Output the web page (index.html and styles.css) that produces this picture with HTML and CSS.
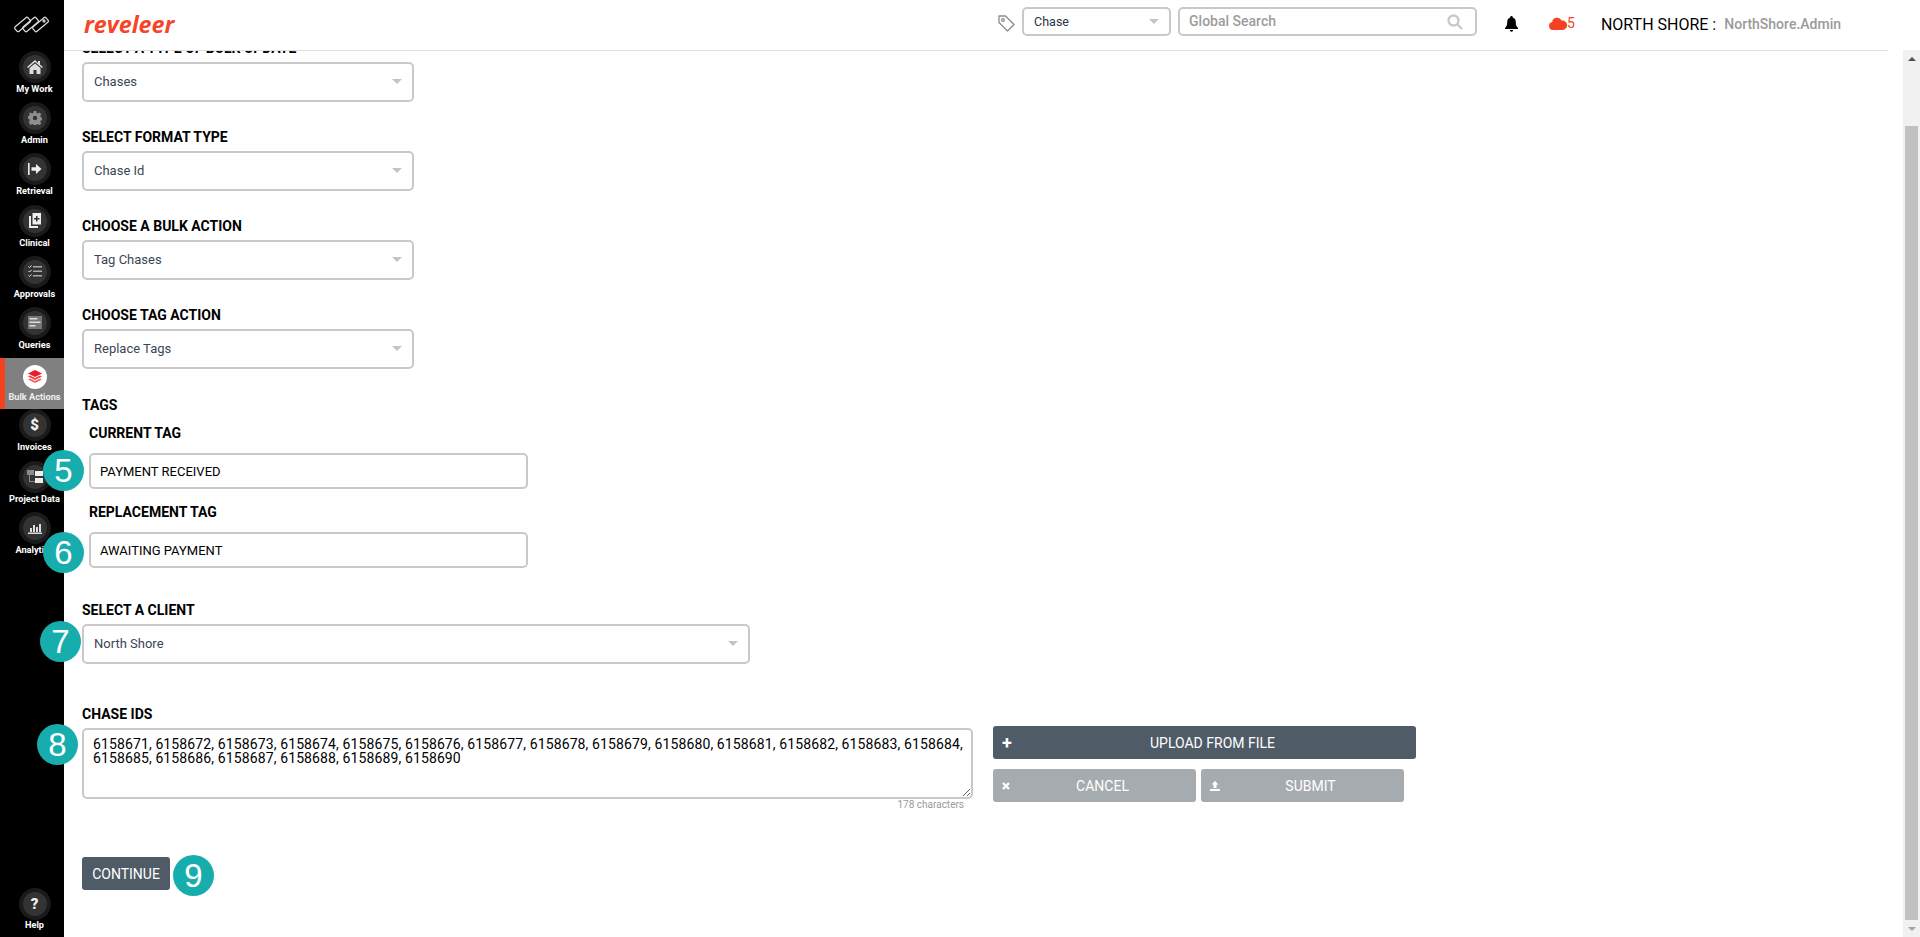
FILE: index.html
```html
<!DOCTYPE html>
<html lang="en">
<head>
    <meta charset="UTF-8">
    <title>Reveleer - Bulk Actions</title>
    <link rel="stylesheet" href="styles.css">
</head>
<body>
<div class="app">
    <nav class="sidebar">
        <div class="brand-mark">
            <svg width="37" height="18" viewBox="0 0 37 18" fill="none" stroke="#d8d8d8" stroke-width="1.3">
                <rect x="1" y="5.500" width="17" height="6" rx="1.500" transform="rotate(-40 9.500 8.500)"/>
                <rect x="9" y="5.500" width="17" height="6" rx="1.500" transform="rotate(-40 17.500 8.500)"/>
                <rect x="19" y="5.500" width="17" height="6" rx="1.500" transform="rotate(-40 27.500 8.500)"/>
                <circle cx="31" cy="5" r="1"/>
            </svg>
        </div>
        <a class="nav-item">
            <span class="nav-icon"><svg width="16" height="14" viewBox="0 0 16 14" fill="#ddd"><path d="M8 0 0 7l1 1 7-6 7 6 1-1-3-2.600V1h-2v2Z"/><path d="M8 3.400 2.500 8v6h4V10h3v4h4V8Z"/></svg></span>
            <span class="nav-label">My Work</span>
        </a>
        <a class="nav-item">
            <span class="nav-icon"><svg width="14" height="14" viewBox="0 0 14 14" fill="#8f8f8f"><path d="M5.800 0h2.400l.4 2 1.300.6L11.600 1.500l1.700 1.700-1.100 1.700.6 1.300 2 .4v2.400l-2 .4-.6 1.300 1.100 1.700-1.700 1.700-1.700-1.100-1.300.6-.4 2H5.800l-.4-2-1.300-.6-1.700 1.100L.7 11.100l1.100-1.700-.6-1.300-2-.4V5.300l2-.4.6-1.300L.7 3.200 2.400 1.500l1.700 1.100 1.300-.6ZM7 4.800a2.200 2.200 0 1 0 0 4.400 2.200 2.200 0 0 0 0-4.400Z"/></svg></span>
            <span class="nav-label">Admin</span>
        </a>
        <a class="nav-item">
            <span class="nav-icon"><svg width="14" height="12" viewBox="0 0 14 12" fill="#eee"><rect x="0" y="0" width="1.600" height="12"/><path d="M8 1 13.500 6 8 11V7.800H3.500V4.200H8Z"/></svg></span>
            <span class="nav-label">Retrieval</span>
        </a>
        <a class="nav-item">
            <span class="nav-icon"><svg width="14" height="16" viewBox="0 0 14 16" fill="#eee"><path d="M1 3h2v10h7v2H1Z"/><path d="M4.500 0H13v11.500H4.500ZM8 3v2H6v1.500h2v2h1.500v-2h2V5h-2V3Z"/></svg></span>
            <span class="nav-label">Clinical</span>
        </a>
        <a class="nav-item">
            <span class="nav-icon"><svg width="14" height="13" viewBox="0 0 14 13" fill="#ddd"><path d="m.5 1.500 1 1 2-2" fill="none" stroke="#eee" stroke-width="1"/><rect x="5" y="1" width="9" height="1.500" fill="#aaa"/><path d="m.5 6 1 1 2-2" fill="none" stroke="#eee" stroke-width="1"/><rect x="5" y="5.500" width="9" height="1.500" fill="#aaa"/><path d="m.5 10.500 1 1 2-2" fill="none" stroke="#eee" stroke-width="1"/><rect x="5" y="10" width="9" height="1.500" fill="#aaa"/></svg></span>
            <span class="nav-label">Approvals</span>
        </a>
        <a class="nav-item">
            <span class="nav-icon"><svg width="14" height="13" viewBox="0 0 14 13"><rect width="14" height="13" fill="#777"/><rect x="1.500" y="2" width="8" height="1.500" fill="#ddd"/><rect x="1.500" y="5.500" width="11" height="1.500" fill="#ddd"/><rect x="1.500" y="9" width="6" height="1.500" fill="#ddd"/></svg></span>
            <span class="nav-label">Queries</span>
        </a>
        <a class="nav-item active">
            <span class="nav-icon"><svg width="14" height="14" viewBox="0 0 14 14" fill="#ee1c25"><path d="M7 0 14 3.500 7 7 0 3.500Z"/><path d="m0 6.500 2-1 5 2.500 5-2.500 2 1L7 10Z" opacity=".85"/><path d="m0 9.500 2-1 5 2.500 5-2.500 2 1L7 13Z" opacity=".7"/></svg></span>
            <span class="nav-label">Bulk Actions</span>
        </a>
        <a class="nav-item">
            <span class="nav-icon dollar">$</span>
            <span class="nav-label">Invoices</span>
        </a>
        <a class="nav-item">
            <span class="nav-icon"><svg width="16" height="14" viewBox="0 0 16 14" fill="#8a8a8a"><rect x="0" y="0" width="7" height="5"/><rect x="8" y="1" width="8" height="5" fill="#eee"/><rect x="8" y="8" width="8" height="5" fill="#eee"/><path d="M2 5h1v6h5v1H2Z"/></svg></span>
            <span class="nav-label">Project Data</span>
        </a>
        <a class="nav-item">
            <span class="nav-icon"><svg width="14" height="12" viewBox="0 0 14 12" fill="#ddd"><rect x="2" y="6" width="2" height="4"/><rect x="5" y="3" width="2" height="7"/><rect x="8" y="5" width="2" height="5"/><rect x="11" y="2" width="2" height="8"/><rect x="0" y="10.500" width="14" height="1.500"/></svg></span>
            <span class="nav-label">Analytics</span>
        </a>
        <a class="nav-item help">
            <span class="nav-icon question">?</span>
            <span class="nav-label">Help</span>
        </a>
    </nav>

    <div class="main">
        <header class="topbar">
            <div class="logo">reveleer</div>
            <div class="topbar-right">
                <svg class="tag-icon" width="17" height="17" viewBox="0 0 17 17" fill="none" stroke="#8c8c8c" stroke-width="1.300"><path d="M1 1h6.500l8.500 8.500-6.500 6.500L1 7.500Z" stroke-linejoin="round"/><circle cx="5" cy="5" r="1.300"/></svg>
                <div class="select select-small"><span>Chase</span><i class="caret"></i></div>
                <input class="search" type="text" placeholder="Global Search">
                <svg class="search-icon" width="16" height="16" viewBox="0 0 16 16" fill="none" stroke="#c9c9c9" stroke-width="2.400"><circle cx="6.500" cy="6.500" r="5"/><path d="m10.500 10.500 4.500 4.500"/></svg>
                <svg class="bell" width="13" height="16" viewBox="0 0 13 16"><path d="M6.500 0a1.200 1.200 0 0 1 1.200 1.400C10 2 10.800 4 10.800 6.500c0 3 .8 4 2.200 5.500v1H0v-1c1.400-1.500 2.200-2.500 2.200-5.500C2.200 4 3 2 5.300 1.400A1.200 1.200 0 0 1 6.500 0ZM4.800 14h3.400a1.700 1.700 0 0 1-3.400 0Z"/></svg>
                <div class="alerts">
                    <svg width="18" height="13" viewBox="0 0 18 13" fill="#f4411f"><path d="M4 13a4 4 0 0 1-.8-7.900A5 5 0 0 1 12.600 3.500 4.800 4.800 0 0 1 14 13Z"/></svg>
                    <span>5</span>
                </div>
                <div class="org">NORTH SHORE :</div>
                <div class="user">NorthShore.Admin</div>
            </div>
        </header>

        <div class="page">
            <div class="form">
                <div class="field">
                    <label class="field-label">SELECT A TYPE OF BULK UPDATE</label>
                    <div class="select"><span>Chases</span><i class="caret"></i></div>
                </div>
                <div class="field">
                    <label class="field-label">SELECT FORMAT TYPE</label>
                    <div class="select"><span>Chase Id</span><i class="caret"></i></div>
                </div>
                <div class="field">
                    <label class="field-label">CHOOSE A BULK ACTION</label>
                    <div class="select"><span>Tag Chases</span><i class="caret"></i></div>
                </div>
                <div class="field">
                    <label class="field-label">CHOOSE TAG ACTION</label>
                    <div class="select"><span>Replace Tags</span><i class="caret"></i></div>
                </div>

                <div class="tags">
                    <label class="field-label tags-title">TAGS</label>
                    <div class="tag-field">
                        <label class="field-label tag-label">CURRENT TAG</label>
                        <input class="tag-input" type="text" value="PAYMENT RECEIVED">
                        <span class="marker marker-5">5</span>
                    </div>
                    <div class="tag-field">
                        <label class="field-label tag-label">REPLACEMENT TAG</label>
                        <input class="tag-input" type="text" value="AWAITING PAYMENT">
                        <span class="marker marker-6">6</span>
                    </div>
                </div>

                <div class="field client">
                    <label class="field-label">SELECT A CLIENT</label>
                    <div class="select select-wide"><span>North Shore</span><i class="caret"></i></div>
                    <span class="marker marker-7">7</span>
                </div>

                <div class="field ids">
                    <label class="field-label">CHASE IDS</label>
                    <div class="ids-row">
                        <div class="ids-box">
                            <textarea class="ids-text">6158671, 6158672, 6158673, 6158674, 6158675, 6158676, 6158677, 6158678, 6158679, 6158680, 6158681, 6158682, 6158683, 6158684, 6158685, 6158686, 6158687, 6158688, 6158689, 6158690</textarea>
                            <div class="char-count">178 characters</div>
                        </div>
                        <div class="ids-actions">
                            <button class="btn btn-dark btn-upload"><span class="btn-icon plus">+</span>UPLOAD FROM FILE</button>
                            <div class="btn-row">
                                <button class="btn btn-muted btn-cancel">
                                    <svg class="btn-icon" width="8" height="8" viewBox="0 0 8 8" fill="none" stroke="#fff" stroke-width="2.400"><path d="m1 1 6 6M7 1 1 7"/></svg>
                                    CANCEL
                                </button>
                                <button class="btn btn-muted btn-submit">
                                    <svg class="btn-icon" width="10" height="10" viewBox="0 0 10 10" fill="#fff"><path d="M5 0 8.500 3.500H6.500V7h-3V3.500h-2Z"/><rect y="8" width="10" height="2"/></svg>
                                    SUBMIT
                                </button>
                            </div>
                        </div>
                    </div>
                    <span class="marker marker-8">8</span>
                </div>

                <div class="continue-row">
                    <button class="btn btn-dark btn-continue">CONTINUE</button>
                    <span class="marker marker-9">9</span>
                </div>
            </div>
        </div>
    </div>

    <div class="scrollbar">
        <div class="scroll-arrow"><i class="arrow-up"></i></div>
        <div class="scroll-track"><div class="scroll-thumb"></div></div>
        <div class="scroll-arrow"><i class="arrow-down"></i></div>
    </div>
</div>
</body>
</html>
```

FILE: styles.css
```css
* {
    margin: 0;
    padding: 0;
    box-sizing: border-box;
}

html, body {
    height: 100%;
    overflow: hidden;
}

body {
    font-family: 'Roboto', sans-serif;
    background-color: #fff;
    color: #000;
}

.app {
    display: flex;
    height: 937px;
}

/* left nav */
.sidebar {
    width: 64px;
    flex: none;
    background-color: #000;
    display: flex;
    flex-direction: column;
}

.brand-mark {
    height: 51px;
    padding: 16px 0 0 13px;
}

.nav-item {
    height: 51.2px;
    flex: none;
    border-left: 5px solid transparent;
    display: flex;
    flex-direction: column;
    align-items: center;
    color: #fff;
}

.nav-item.active {
    background-color: #808080;
    border-left-color: #f4411f;
}

.nav-icon {
    width: 24px;
    height: 24px;
    margin-top: 4px;
    border-radius: 50%;
    background-color: #333;
    box-shadow: 0 0 0 4px #1a1a1a;
    display: flex;
    align-items: center;
    justify-content: center;
    flex: none;
}

.nav-item.active .nav-icon {
    background-color: #fff;
    box-shadow: none;
    margin-top: 7px;
}

.nav-label {
    font-size: 9.2px;
    font-weight: 700;
    line-height: 12px;
    margin-top: 4px;
    white-space: nowrap;
}

.nav-item.active .nav-label {
    margin-top: 2px;
    color: #eee;
}

.dollar, .question {
    font-size: 15px;
    font-weight: 900;
    color: #eee;
}

.help {
    margin-top: auto;
    height: 48px;
}

.help .nav-icon {
    margin-top: 3px;
}

.help .nav-label {
    margin-top: 3px;
}

/* main column */
.main {
    flex: 1;
    min-width: 0;
    display: flex;
    flex-direction: column;
}

.topbar {
    height: 51px;
    flex: none;
    margin-right: 15px;
    padding-right: 47px;
    border-bottom: 1px solid #e0e0e0;
    background-color: #fff;
    display: flex;
    align-items: flex-start;
    justify-content: space-between;
    position: relative;
    z-index: 2;
}

.logo {
    font-family: 'Open Sans', sans-serif;
    font-style: italic;
    font-weight: 700;
    font-size: 23.3px;
    line-height: 30px;
    color: #f4452a;
    margin: 9px 0 0 20px;
}

.topbar-right {
    display: flex;
    align-items: flex-start;
    position: relative;
    padding-top: 7px;
}

.tag-icon {
    margin: 8px 7px 0 0;
}

.select {
    width: 332px;
    height: 40px;
    border: 2px solid #c9c9c9;
    border-radius: 5px;
    padding: 0 10px 2px;
    font-size: 13px;
    color: #3c4654;
    display: flex;
    align-items: center;
    justify-content: space-between;
}

.select-small {
    width: 149px;
    height: 29px;
    color: #2b3442;
    font-size: 12.500px;
    margin-right: 7px;
    padding-bottom: 0;
}

.select-wide {
    width: 668px;
}

.caret {
    width: 0;
    height: 0;
    border-left: 5px solid transparent;
    border-right: 5px solid transparent;
    border-top: 5px solid #c4c4c4;
}

.search {
    width: 299px;
    height: 29px;
    border: 2px solid #c9c9c9;
    border-radius: 5px;
    padding: 0 9px 1px;
    font-family: 'Roboto', sans-serif;
    font-size: 14px;
    font-weight: 500;
    outline: none;
}

.search::placeholder {
    color: #9c9c9c;
    opacity: 1;
}

.search-icon {
    position: absolute;
    left: 449px;
    top: 14px;
}

.bell {
    margin: 9px 0 0 28px;
}

.alerts {
    display: flex;
    align-items: center;
    margin: 9px 0 0 31px;
    color: #f4411f;
    font-size: 14px;
    line-height: 15px;
    height: 15px;
}

.org {
    font-size: 16px;
    line-height: 20px;
    margin: 8px 0 0 26px;
    white-space: nowrap;
}

.user {
    font-size: 14px;
    font-weight: 500;
    line-height: 20px;
    color: #9a9a9a;
    margin: 7px 0 0 8px;
    white-space: nowrap;
}

/* form */
.page {
    flex: 1;
    min-height: 0;
}

.form {
    margin-top: -12px;
    padding-left: 18px;
}

.field {
    position: relative;
    margin-bottom: 26px;
}

.field-label {
    display: block;
    font-size: 14px;
    font-weight: 700;
    line-height: 18px;
    margin-bottom: 5px;
}

.tags {
    margin-top: 27px;
}

.tags-title {
    margin-bottom: 10px;
}

.tag-field {
    position: relative;
    padding-left: 7px;
    margin-bottom: 14px;
}

.tag-label {
    margin-bottom: 11px;
}

.tag-input {
    display: block;
    width: 439px;
    height: 36px;
    border: 2px solid #c9c9c9;
    border-radius: 5px;
    padding: 0 9px;
    font-family: 'Roboto', sans-serif;
    font-size: 13px;
    color: #000;
    outline: none;
}

.client {
    margin-top: 33px;
    margin-bottom: 41px;
}

.ids-row {
    display: flex;
}

.ids-box {
    width: 891px;
    flex: none;
}

.ids-text {
    display: block;
    width: 891px;
    height: 71px;
    border: 2px solid #c9c9c9;
    border-radius: 5px;
    padding: 7px 2px 7px 9px;
    font-family: 'Roboto', sans-serif;
    font-size: 14px;
    line-height: 14px;
    letter-spacing: 0.12px;
    color: #000;
    outline: none;
    overflow: hidden;
}

.char-count {
    font-size: 10px;
    line-height: 12px;
    color: #9a9a9a;
    text-align: right;
    padding-right: 9px;
}

.ids-actions {
    width: 423px;
    margin: -2px 0 0 20px;
}

.btn {
    display: flex;
    align-items: center;
    justify-content: center;
    position: relative;
    border: none;
    border-radius: 3px;
    color: #fff;
    font-family: 'Roboto', sans-serif;
    font-size: 14px;
    height: 33px;
}

.btn-dark {
    background-color: #4f5b66;
}

.btn-muted {
    background-color: #a6abb0;
}

.btn-upload {
    width: 100%;
    padding-left: 16px;
}

.btn-icon {
    position: absolute;
    left: 9px;
    top: 50%;
    transform: translateY(-50%);
}

.plus {
    font-size: 18px;
    font-weight: 700;
    line-height: 18px;
}

.btn-row {
    display: flex;
    gap: 5px;
    margin-top: 10px;
}

.btn-cancel, .btn-submit {
    width: 203px;
    padding-left: 16px;
}

.continue-row {
    position: relative;
    margin-top: 46px;
}

.btn-continue {
    width: 88px;
}

/* numbered callouts */
.marker {
    position: absolute;
    width: 41px;
    height: 41px;
    border-radius: 50%;
    background-color: #17adad;
    color: #fff;
    font-family: 'Liberation Sans', sans-serif;
    font-size: 33px;
    line-height: 41px;
    text-align: center;
}

.marker-5 {
    left: -39px;
    top: 26px;
}

.marker-6 {
    left: -39px;
    top: 29px;
}

.marker-7 {
    left: -42px;
    top: 20px;
}

.marker-8 {
    left: -45px;
    top: 19px;
}

.marker-9 {
    left: 91px;
    top: -2px;
}

/* fake scrollbar */
.scrollbar {
    width: 17px;
    flex: none;
    margin-top: 50px;
    background-color: #f1f1f1;
    display: flex;
    flex-direction: column;
}

.scroll-arrow {
    height: 17px;
    flex: none;
    display: flex;
    align-items: center;
    justify-content: center;
}

.arrow-up {
    border-left: 4px solid transparent;
    border-right: 4px solid transparent;
    border-bottom: 4px solid #505050;
}

.arrow-down {
    border-left: 4px solid transparent;
    border-right: 4px solid transparent;
    border-top: 4px solid #a3a3a3;
}

.scroll-track {
    flex: 1;
    padding: 59px 2px 0;
    display: flex;
}

.scroll-thumb {
    flex: 1;
    background-color: #c1c1c1;
}
```
